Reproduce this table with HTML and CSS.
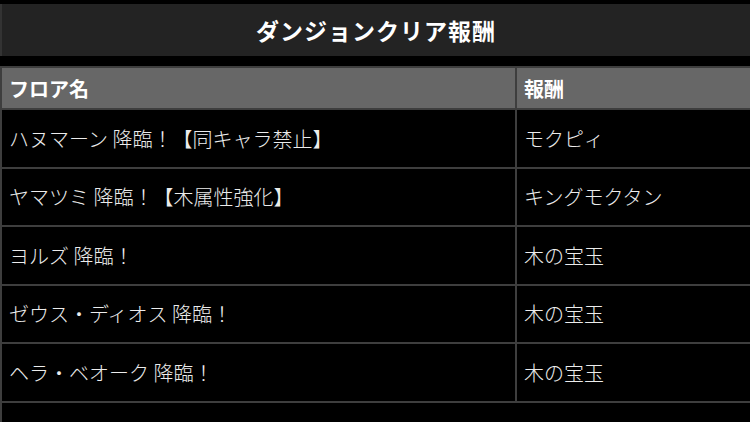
FILE: index.html
```html
<!DOCTYPE html>
<html lang="ja">
<head>
<meta charset="utf-8">
<link rel="stylesheet" href="styles.css">
</head>
<body>
<div class="page">
  <div class="title">ダンジョンクリア報酬</div>
  <table class="rewards">
    <colgroup><col class="col-floor"><col class="col-reward"></colgroup>
    <thead>
      <tr><th>フロア名</th><th>報酬</th></tr>
    </thead>
    <tbody>
      <tr><td>ハヌマーン 降臨！【同キャラ禁止】</td><td>モクピィ</td></tr>
      <tr><td>ヤマツミ 降臨！【木属性強化】</td><td>キングモクタン</td></tr>
      <tr><td>ヨルズ 降臨！</td><td>木の宝玉</td></tr>
      <tr><td>ゼウス・ディオス 降臨！</td><td>木の宝玉</td></tr>
      <tr><td>ヘラ・ベオーク 降臨！</td><td>木の宝玉</td></tr>
      <tr><td class="empty" colspan="2"></td></tr>
    </tbody>
  </table>
</div>
</body>
</html>
```
FILE: styles.css
```css
html, body {
  margin: 0;
  padding: 0;
  background: #000;
}
body {
  width: 750px;
  height: 422px;
  overflow: hidden;
  font-family: "Noto Sans CJK JP", "Noto Sans", sans-serif;
}
.page {
  padding-top: 4px;
}
.title {
  height: 52px;
  background: #232323;
  color: #fff;
  font-size: 23px;
  font-weight: bold;
  letter-spacing: 1px;
  display: flex;
  align-items: center;
  justify-content: center;
  border-left: 2px solid #333;
  box-sizing: border-box;
}
.rewards {
  margin-top: 10px;
  width: 750px;
  border-collapse: collapse;
  table-layout: fixed;
}
.col-floor { width: 515px; }
.col-reward { width: 235px; }
.rewards th,
.rewards td {
  border: 2px solid #3e3e3e;
  text-align: left;
  padding: 0 7px;
  white-space: nowrap;
}
.rewards th {
  background: #676767;
  color: #fff;
  font-weight: bold;
  font-size: 20px;
  height: 40px;
}
.rewards td {
  background: #000;
  color: #ececec;
  font-size: 20px;
  font-weight: 300;
  height: 56.5px;
}
.rewards td.empty {
  height: 56.5px;
}
```
